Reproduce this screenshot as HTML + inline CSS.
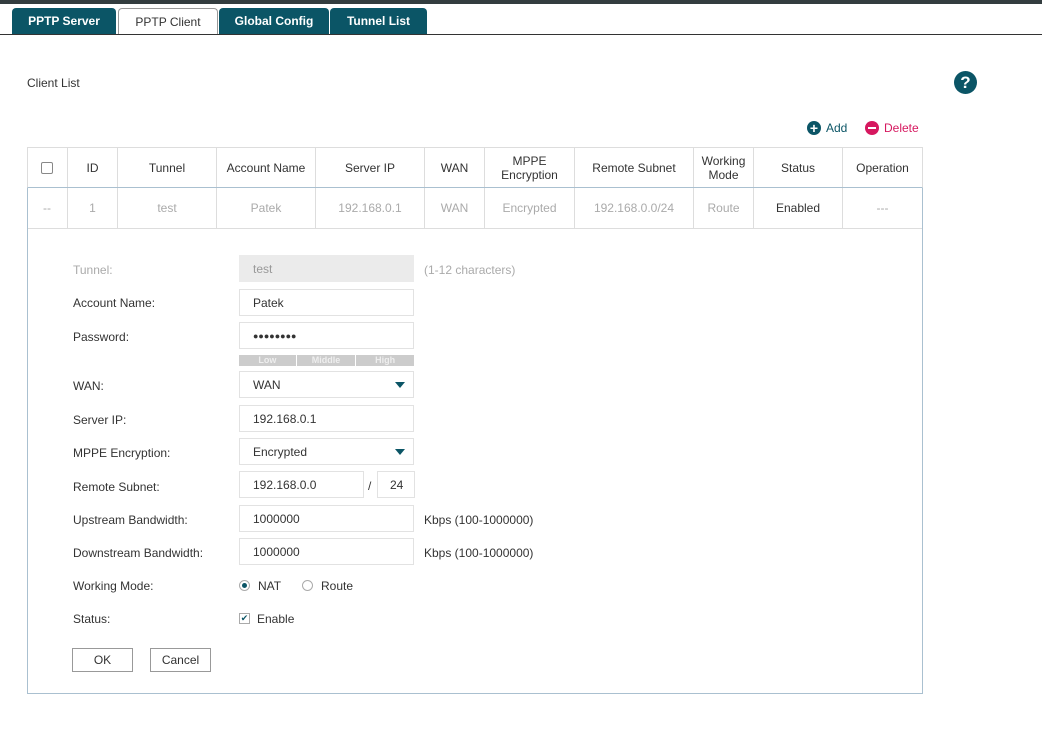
<!DOCTYPE html>
<html><head><meta charset="utf-8"><style>
*{box-sizing:border-box;margin:0;padding:0}
body{width:1042px;height:744px;background:#fff;font-family:"Liberation Sans",Tahoma,sans-serif;font-size:12px;color:#333;position:relative;overflow:hidden}
.a{position:absolute}
.tab{position:absolute;top:8px;height:26px;background:#0b5566;color:#fff;font-weight:bold;font-size:12px;text-align:center;line-height:26px;border-radius:4px 4px 0 0}
.th,.td{position:absolute;display:flex;align-items:center;justify-content:center;text-align:center;border-right:1px solid #ddd;line-height:14px}
.td{color:#aaa}
.lbl{position:absolute;left:73px;line-height:14px}
.inp{position:absolute;left:239px;width:175px;height:27px;border:1px solid #e2e2e2;padding-left:13px;line-height:27px;color:#333}
.arr{position:absolute;right:8px;top:10px;width:0;height:0;border-left:5px solid transparent;border-right:5px solid transparent;border-top:6px solid #0b5566}
.hint{position:absolute;left:424px;line-height:14px}
.btn{position:absolute;top:648px;height:24px;border:1px solid #999;text-align:center;line-height:22px;background:#fff}
</style></head><body>
<div class="a" style="left:0;top:0;width:1042px;height:4px;background:#333d3f"></div>
<div class="tab" style="left:12px;width:104px">PPTP Server</div>
<div class="tab" style="left:118px;width:100px;background:#fff;color:#333;font-weight:normal;border:1px solid #999;border-bottom:none;height:27px">PPTP Client</div>
<div class="tab" style="left:219px;width:110px">Global Config</div>
<div class="tab" style="left:330px;width:97px">Tunnel List</div>
<div class="a" style="left:0;top:34px;width:1042px;height:1px;background:#333"></div>
<div class="a" style="left:27px;top:76px;color:#333">Client List</div>
<div class="a" style="left:954px;top:71px;width:23px;height:23px;border-radius:50%;background:#0b5566;color:#fff;font-weight:bold;font-size:17px;text-align:center;line-height:23px">?</div>
<div class="a" style="left:807px;top:121px;width:14px;height:14px;border-radius:50%;background:#0b5566;color:#fff;font-weight:bold;font-size:14px;line-height:14px;text-align:center">+</div>
<div class="a" style="left:826px;top:121px;color:#0b5566">Add</div>
<div class="a" style="left:865px;top:121px;width:14px;height:14px;border-radius:50%;background:#d6185f"><div class="a" style="left:3px;top:6px;width:8px;height:2px;background:#fff"></div></div>
<div class="a" style="left:884px;top:121px;color:#d6185f">Delete</div>
<div class="a" style="left:27px;top:147px;width:896px;height:547px;border:1px solid #aac0d0;border-top:1px solid #ddd"></div>
<div class="a" style="left:27px;top:147px;width:896px;height:41px;border:1px solid #ddd;border-bottom:1px solid #aac0d0"></div>
<div class="a" style="left:28px;top:228px;width:894px;height:1px;background:#ddd"></div>
<div class="th" style="left:27px;top:148px;width:41px;height:39px"><span style="width:12px;height:12px;border:1px solid #888;border-radius:2px;display:block"></span></div>
<div class="th" style="left:68px;top:148px;width:50px;height:39px">ID</div>
<div class="th" style="left:118px;top:148px;width:99px;height:39px">Tunnel</div>
<div class="th" style="left:217px;top:148px;width:99px;height:39px">Account Name</div>
<div class="th" style="left:316px;top:148px;width:109px;height:39px">Server IP</div>
<div class="th" style="left:425px;top:148px;width:60px;height:39px">WAN</div>
<div class="th" style="left:485px;top:148px;width:90px;height:39px">MPPE<br>Encryption</div>
<div class="th" style="left:575px;top:148px;width:119px;height:39px">Remote Subnet</div>
<div class="th" style="left:694px;top:148px;width:60px;height:39px">Working<br>Mode</div>
<div class="th" style="left:754px;top:148px;width:89px;height:39px">Status</div>
<div class="th" style="left:843px;top:148px;width:79px;height:39px;border-right:none">Operation</div>
<div class="td" style="left:27px;top:188px;width:41px;height:40px">--</div>
<div class="td" style="left:68px;top:188px;width:50px;height:40px">1</div>
<div class="td" style="left:118px;top:188px;width:99px;height:40px">test</div>
<div class="td" style="left:217px;top:188px;width:99px;height:40px">Patek</div>
<div class="td" style="left:316px;top:188px;width:109px;height:40px">192.168.0.1</div>
<div class="td" style="left:425px;top:188px;width:60px;height:40px">WAN</div>
<div class="td" style="left:485px;top:188px;width:90px;height:40px">Encrypted</div>
<div class="td" style="left:575px;top:188px;width:119px;height:40px">192.168.0.0/24</div>
<div class="td" style="left:694px;top:188px;width:60px;height:40px">Route</div>
<div class="td" style="left:754px;top:188px;width:89px;height:40px;color:#333">Enabled</div>
<div class="td" style="left:843px;top:188px;width:79px;height:40px;border-right:none">---</div>

<div class="lbl" style="top:263px;color:#aaa">Tunnel:</div>
<div class="inp" style="top:255px;background:#ebebeb;border-color:#ebebeb;color:#999">test</div>
<div class="hint" style="top:263px;color:#aaa">(1-12 characters)</div>
<div class="lbl" style="top:296px">Account Name:</div>
<div class="inp" style="top:289px">Patek</div>
<div class="lbl" style="top:330px">Password:</div>
<div class="inp" style="top:322px;font-size:9px;letter-spacing:0px;font-weight:bold">●●●●●●●●</div>
<div class="a" style="left:239px;top:355px;width:175px;height:11px;display:flex;gap:1px;font-size:9px;font-weight:bold;color:#eee;line-height:11px;text-align:center">
<div style="flex:57;background:#ccc">Low</div><div style="flex:59;background:#ccc">Middle</div><div style="flex:58;background:#ccc">High</div></div>
<div class="lbl" style="top:379px">WAN:</div>
<div class="inp" style="top:371px">WAN<div class="arr"></div></div>
<div class="lbl" style="top:413px">Server IP:</div>
<div class="inp" style="top:405px">192.168.0.1</div>
<div class="lbl" style="top:446px">MPPE Encryption:</div>
<div class="inp" style="top:438px">Encrypted<div class="arr"></div></div>
<div class="lbl" style="top:480px">Remote Subnet:</div>
<div class="inp" style="top:471px;width:125px">192.168.0.0</div>
<div class="a" style="left:368px;top:479px">/</div>
<div class="inp" style="top:471px;left:377px;width:38px;padding-left:12px">24</div>
<div class="lbl" style="top:513px">Upstream Bandwidth:</div>
<div class="inp" style="top:505px">1000000</div>
<div class="hint" style="top:513px">Kbps (100-1000000)</div>
<div class="lbl" style="top:546px">Downstream Bandwidth:</div>
<div class="inp" style="top:538px">1000000</div>
<div class="hint" style="top:546px">Kbps (100-1000000)</div>
<div class="lbl" style="top:579px">Working Mode:</div>
<div class="a" style="left:239px;top:580px;width:11px;height:11px;border:1px solid #aaa;border-radius:50%"><div class="a" style="left:2px;top:2px;width:5px;height:5px;border-radius:50%;background:#0b5566"></div></div>
<div class="a" style="left:258px;top:579px">NAT</div>
<div class="a" style="left:302px;top:580px;width:11px;height:11px;border:1px solid #aaa;border-radius:50%"></div>
<div class="a" style="left:321px;top:579px">Route</div>
<div class="lbl" style="top:612px">Status:</div>
<div class="a" style="left:239px;top:613px;width:11px;height:11px;border:1px solid #aaa;font-size:9px;line-height:9px;text-align:center;color:#0b5566">✔</div>
<div class="a" style="left:257px;top:612px">Enable</div>
<div class="btn" style="left:72px;width:61px">OK</div>
<div class="btn" style="left:150px;width:61px">Cancel</div>
</body></html>
